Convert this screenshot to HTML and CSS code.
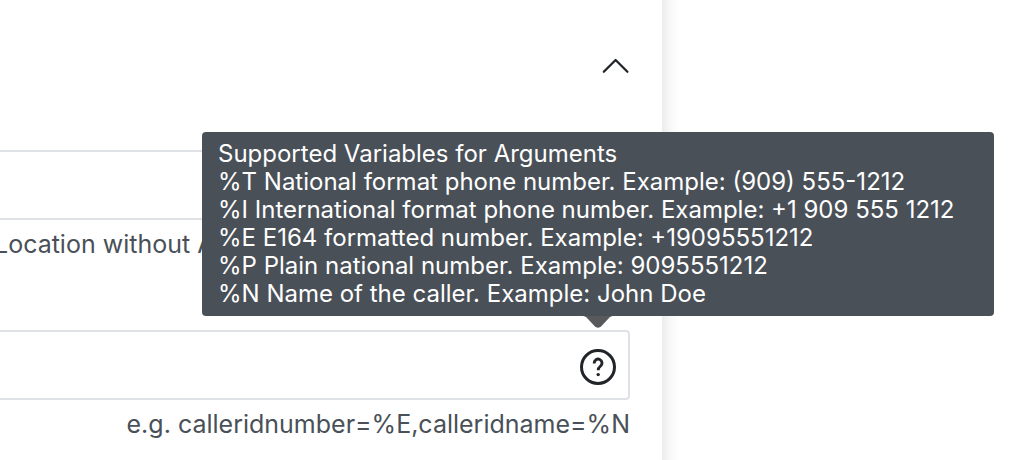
FILE: index.html
```
<!DOCTYPE html>
<html lang="en">
<head>
<meta charset="utf-8">
<title>Caller arguments</title>
<link rel="stylesheet" href="styles.css">
</head>
<body>
<main class="panel">
  <header class="panel-header">
    <button class="collapse" type="button" aria-label="Collapse section">
      <svg width="28" height="18" viewBox="0 0 28 18" fill="none" stroke="#212529" stroke-width="2.3" stroke-linecap="round" stroke-linejoin="round"><path d="M1.800 15.800 13.600 4 25.400 15.800"/></svg>
    </button>
  </header>
  <form class="form">
    <div class="field">
      <input class="box" type="text" id="location" aria-label="Location" aria-describedby="location-hint">
      <p class="hint" id="location-hint">Location without A</p>
    </div>
    <div class="field">
      <div class="box box-with-help">
        <input class="bare-input" type="text" id="arguments" aria-label="Arguments" aria-describedby="arguments-hint">
        <div class="help">
          <button class="help-button" type="button" aria-label="Help" aria-describedby="tip">
            <svg width="36" height="36" viewBox="0 0 36 36" fill="none" stroke="#212529"><circle cx="18" cy="18" r="16.5" stroke-width="3"/><path d="M14.200 14.600v-.6a3.900 3.900 0 1 1 6.400 3c-1.700 1.400-2.400 2.200-2.400 4.200" stroke-width="2.900"/><circle cx="18.200" cy="25.600" r="1.700" fill="#212529" stroke="none"/></svg>
          </button>
          <div class="tooltip" id="tip" role="tooltip">
            <p>Supported Variables for Arguments</p>
            <p>%T National format phone number. Example: (909) 555-1212</p>
            <p>%I International format phone number. Example: +1 909 555 1212</p>
            <p>%E E164 formatted number. Example: +19095551212</p>
            <p>%P Plain national number. Example: 9095551212</p>
            <p>%N Name of the caller. Example: John Doe</p>
            <svg class="arrow" width="30" height="12" viewBox="0 0 30 12" fill="#58595b"><path d="M0 0h30c-2 0-3 1-4 2l-7.500 8c-2 2.300-5 2.300-7 0L4 2C3 1 2 0 0 0z"/></svg>
          </div>
        </div>
      </div>
      <p class="hint hint-right" id="arguments-hint">e.g. calleridnumber=%E,calleridname=%N</p>
    </div>
  </form>
</main>
</body>
</html>
```
FILE: styles.css
```
* {
  box-sizing: border-box;
}

body {
  margin: 0;
  overflow: hidden;
  background: #fff;
  color: #495057;
  font: 24px/28px Inter, "Liberation Sans", sans-serif;
}

p {
  margin: 0;
}

button {
  display: block;
  padding: 0;
  border: 0;
  background: none;
}

svg {
  display: block;
}

.panel {
  position: relative;
  min-height: 100vh;
  margin-right: 358px;
  padding: 56px 32px 16px 0;
  background: #fff;
}

/* Soft shade along the full height of the panel's right edge */
.panel::after {
  content: "";
  position: absolute;
  top: 0;
  bottom: 0;
  left: 100%;
  width: 18px;
  background: linear-gradient(to right, #ececec, #f6f6f6 35%, #fcfcfc 70%, #fff);
}

.panel-header {
  display: flex;
  justify-content: flex-end;
  padding-bottom: 76px;
}

.form {
  display: flex;
  flex-direction: column;
  gap: 72px;
  margin-left: -6px;
}

.box {
  display: flex;
  align-items: center;
  width: 100%;
  height: 70px;
  padding: 0 12px;
  border: 2px solid #dee2e6;
  border-radius: 4px;
  background: #fff;
  font: inherit;
}

.box-with-help {
  padding-top: 4px;
}

.bare-input {
  flex: 1;
  min-width: 0;
  border: 0;
  background: none;
  font: inherit;
}

.help {
  position: relative;
  z-index: 1;
}

.hint {
  padding-top: 10px;
  font-size: 25px;
}

.hint-right {
  text-align: right;
}

.tooltip {
  position: absolute;
  right: -378px;
  bottom: calc(100% + 33px);
  width: 792px;
  padding: 8px 16px;
  border-radius: 4px;
  background: #495057;
  color: #fff;
  white-space: nowrap;
}

.arrow {
  position: absolute;
  top: 100%;
  right: 381px;
}
```
